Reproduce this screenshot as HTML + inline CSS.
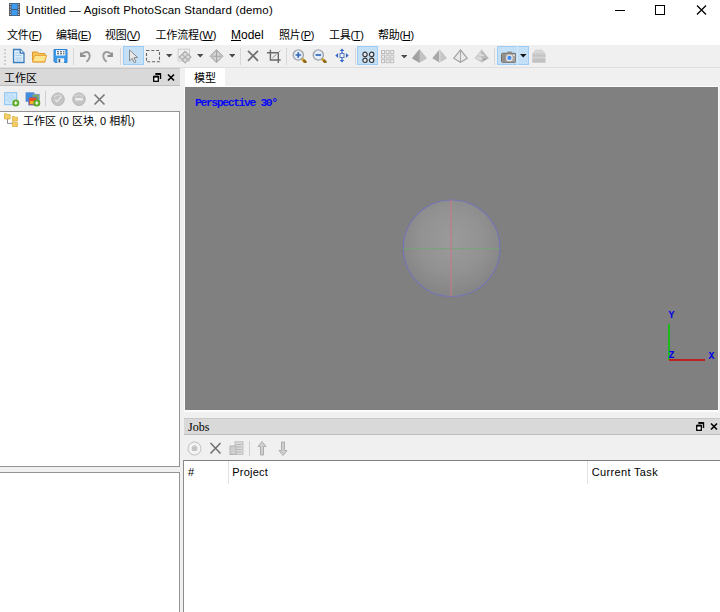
<!DOCTYPE html>
<html><head><meta charset="utf-8">
<style>
html,body{margin:0;padding:0;}
body{width:720px;height:612px;overflow:hidden;background:#f0f0f0;position:relative;
 font-family:"Liberation Sans","Noto Sans CJK SC",sans-serif;font-size:11px;color:#000;}
.abs{position:absolute;}
.t{position:absolute;white-space:nowrap;line-height:16px;}
.l{font-size:11.5px;}
#titlebar{left:0;top:0;width:720px;height:24px;background:#fff;}
#menubar{left:0;top:24px;width:720px;height:21px;background:#fff;}
.ptitle{background:#d9d9d9;border-top:1px solid #c8c8c8;border-bottom:1px solid #bebebe;box-sizing:border-box;}
.white{background:#fff;border:1px solid #949494;box-sizing:border-box;}
.sel{background:#c4e0f7;border:1px solid #9dcdf4;box-sizing:border-box;}
.sep{position:absolute;width:1px;background:#d8d8d8;}
u{text-decoration:underline;}
.mono{font-family:"Liberation Mono",monospace;}
</style></head><body>
<div id="titlebar" class="abs"></div>
<div id="menubar" class="abs"></div>
<svg class="abs" style="left:9px;top:3px" width="11" height="13" viewBox="0 0 11 13" >
 <rect x="0" y="0" width="11" height="13" fill="#4a4e58"/>
 <rect x="2.400" y="0.600" width="6.200" height="5.500" fill="#3d9bf2"/>
 <rect x="2.400" y="6.900" width="6.200" height="5.500" fill="#3d9bf2"/>
 <g fill="#c8ccd2"><rect x="0.700" y="0.8" width="1.100" height="1.300"/><rect x="9.200" y="0.8" width="1.100" height="1.300"/><rect x="0.700" y="3.3" width="1.100" height="1.300"/><rect x="9.200" y="3.3" width="1.100" height="1.300"/><rect x="0.700" y="5.8" width="1.100" height="1.300"/><rect x="9.200" y="5.8" width="1.100" height="1.300"/><rect x="0.700" y="8.3" width="1.100" height="1.300"/><rect x="9.200" y="8.3" width="1.100" height="1.300"/><rect x="0.700" y="10.8" width="1.100" height="1.300"/><rect x="9.200" y="10.8" width="1.100" height="1.300"/></g>
</svg>
<div class="t l" id="ttl" style="left:25.700px;top:2px;letter-spacing:0.155px;">Untitled — Agisoft PhotoScan Standard (demo)</div>
<svg class="abs" style="left:600px;top:0px" width="120" height="22" viewBox="0 0 120 22" fill="none" stroke="#000" stroke-width="1"><path d="M15 10.5h10"/><rect x="55.500" y="5.500" width="9" height="9"/><path d="M97 5.500l9 9M106 5.500l-9 9" stroke-width="1.250"/></svg>
<div class="t" id="m1" style="left:7px;top:27px;letter-spacing:-0.3px;">文件(<u>F</u>)</div>
<div class="t" id="m2" style="left:56px;top:27px;letter-spacing:-0.3px;">编辑(<u>E</u>)</div>
<div class="t" id="m3" style="left:105px;top:27px;letter-spacing:-0.3px;">视图(<u>V</u>)</div>
<div class="t" id="m4" style="left:155.5px;top:27px;letter-spacing:-0.15px;">工作流程(<u>W</u>)</div>
<div class="t" id="m5" style="left:231px;top:27px;letter-spacing:0px;"><span style="font-size:12px"><u>M</u>odel</span></div>
<div class="t" id="m6" style="left:279px;top:27px;letter-spacing:-0.3px;">照片(<u>P</u>)</div>
<div class="t" id="m7" style="left:329px;top:27px;letter-spacing:-0.3px;">工具(<u>T</u>)</div>
<div class="t" id="m8" style="left:378px;top:27px;letter-spacing:-0.3px;">帮助(<u>H</u>)</div>
<svg class="abs" style="left:4px;top:48.6px" width="3" height="17" viewBox="0 0 3 17" ><rect x="0" y="0.0" width="2" height="1.6" fill="#c9c9c9"/><rect x="0" y="3.6" width="2" height="1.6" fill="#c9c9c9"/><rect x="0" y="7.2" width="2" height="1.6" fill="#c9c9c9"/><rect x="0" y="10.8" width="2" height="1.6" fill="#c9c9c9"/><rect x="0" y="14.4" width="2" height="1.6" fill="#c9c9c9"/></svg>
<svg class="abs" style="left:12px;top:48px" width="14" height="16" viewBox="0 0 14 16" >
 <path d="M1.5 1.500h7l3.500 3.500v9.500h-10.500z" fill="#dcecf8" stroke="#3b7fc0" stroke-width="1.300"/>
 <path d="M8.200 1.500v3.700h3.800" fill="#fff" stroke="#2f6fb0" stroke-width="1.200"/>
 <path d="M3.500 5h3M3.500 7.500h6M3.500 10h6M3.500 12h6" stroke="#a9cfee" stroke-width="1"/>
</svg>
<svg class="abs" style="left:31px;top:50px" width="17" height="13" viewBox="0 0 17 13" >
 <path d="M1.500 2h5l1.200 1.500h6.300v8.500h-12.500z" fill="#f6c55a" stroke="#e2982e" stroke-width="1"/>
 <path d="M1.500 11.800l2.200-6.300h12l-2.200 6.300z" fill="#fde58f" stroke="#e9a63a" stroke-width="1"/>
</svg>
<svg class="abs" style="left:53px;top:48px" width="15" height="16" viewBox="0 0 15 16" >
 <path d="M1 1.500h13v13h-12l-1-1z" fill="#3d9be9" stroke="#2a83d6" stroke-width="1"/>
 <rect x="3" y="2.200" width="9.300" height="5.300" fill="#fff"/>
 <path d="M4 3.800h7.500M4 5.800h7.500" stroke="#345" stroke-width="1" stroke-dasharray="2 1"/>
 <rect x="4.300" y="10.300" width="6.800" height="4.500" fill="#f4f4f4"/>
 <rect x="5.600" y="11" width="1.600" height="3.300" fill="#456"/>
</svg>
<div class="sep" style="left:73px;top:48px;height:17px;"></div>
<svg class="abs" style="left:79px;top:50px" width="14" height="13" viewBox="0 0 14 13" >
 <path d="M3 4.300C5 1.300 9.500 1 10.500 4.500C11.200 7.500 9.500 10 8 11.300" fill="none" stroke="#9a9a9a" stroke-width="1.900" stroke-linecap="round"/>
 <path d="M2 2.400v3.600h4.600" fill="none" stroke="#8e8e8e" stroke-width="1.900"/>
</svg>
<svg class="abs" style="left:99.5px;top:50px" width="14" height="13" viewBox="0 0 14 13" >
 <path d="M11 4.300C9 1.300 4.500 1 3.500 4.500C2.800 7.500 4.500 10 6 11.300" fill="none" stroke="#9a9a9a" stroke-width="1.900" stroke-linecap="round"/>
 <path d="M12 2.400v3.600h-4.600" fill="none" stroke="#8e8e8e" stroke-width="1.900"/>
</svg>
<div class="sep" style="left:120px;top:48px;height:17px;"></div>
<div class="abs sel" style="left:123px;top:46px;width:21px;height:19px;"></div>
<svg class="abs" style="left:128px;top:49px" width="11" height="15" viewBox="0 0 11 15" >
 <path d="M1.500 1l0 11 2.700-2.600 2 4.300 1.800-.8-2-4.200 3.700-.2z" fill="#e8e8e8" stroke="#8a8a8a" stroke-width="1"/>
</svg>
<svg class="abs" style="left:145px;top:49px" width="16" height="15" viewBox="0 0 16 15" ><rect x="1.500" y="1.500" width="13" height="11.300" fill="none" stroke="#666" stroke-width="1.100" stroke-dasharray="3 1.800"/></svg>
<svg class="abs" style="left:166.2px;top:54.4px" width="6.5" height="3.4" viewBox="0 0 6.5 3.4" ><path d="M0 0h6.500l-3.250 3.400z" fill="#4a4a4a"/></svg>
<svg class="abs" style="left:177px;top:48px" width="16" height="16" viewBox="0 0 16 16" >
 <rect x="1.200" y="1.200" width="11.300" height="11.800" fill="none" stroke="#cdcdcd" stroke-width="1"/>
 <path d="M8.100 2.900l6.200 6.200-6.200 6.200-6.200-6.200z" fill="#b4b4b4" stroke="#a6a6a6" stroke-width="0.800"/>
 <g fill="#dedede"><circle cx="8.100" cy="6.300" r="1.500"/><circle cx="8.100" cy="12" r="1.500"/><circle cx="5.200" cy="9.100" r="1.500"/><circle cx="11" cy="9.100" r="1.500"/></g>
</svg>
<svg class="abs" style="left:197.3px;top:54.4px" width="6.5" height="3.4" viewBox="0 0 6.5 3.4" ><path d="M0 0h6.500l-3.250 3.400z" fill="#4a4a4a"/></svg>
<svg class="abs" style="left:209px;top:48px" width="16" height="16" viewBox="0 0 16 16" >
 <path d="M7.500 1.600l6.500 6.600-6.500 6.600-6.500-6.600z" fill="#c4c4c4" stroke="#ababab" stroke-width="1"/>
 <path d="M7.500 3.500l4.600 4.700-4.600 4.700-4.600-4.700z" fill="#d6d6d6"/>
 <path d="M7.500 2.500v11.500M3 8.200h9" stroke="#a4a4a4" stroke-width="1.100"/>
</svg>
<svg class="abs" style="left:228.7px;top:54.4px" width="6.5" height="3.4" viewBox="0 0 6.5 3.4" ><path d="M0 0h6.500l-3.250 3.400z" fill="#4a4a4a"/></svg>
<div class="sep" style="left:240px;top:48px;height:17px;"></div>
<svg class="abs" style="left:246px;top:49px" width="14" height="14" viewBox="0 0 14 14" ><path d="M2 1.800l10 10M12 1.800l-10 10" stroke="#707070" stroke-width="1.700" fill="none"/></svg>
<svg class="abs" style="left:266px;top:49px" width="16" height="16" viewBox="0 0 16 16" ><path d="M4.400 0.700v10.300h10.300M1 3.700h11.300v10.300" stroke="#6a6a6a" stroke-width="1.400" fill="none"/><path d="M6.300 9l4.200-3.700M12.300 3.700l2-2" stroke="#8a8a8a" stroke-width="1" fill="none"/></svg>
<div class="sep" style="left:286px;top:48px;height:17px;"></div>
<svg class="abs" style="left:292px;top:48.5px" width="15" height="14.5" viewBox="0 0 15 14.5" >
 <path d="M10 9.700l3 3" stroke="#d9a423" stroke-width="3" stroke-linecap="round"/>
 <path d="M12.300 12l1 1" stroke="#8a6a20" stroke-width="2.600" stroke-linecap="round"/>
 <circle cx="6.300" cy="6" r="5.100" fill="#e6eef8" stroke="#a2a6ac" stroke-width="1.400"/>
 <path d="M3.500 6h5.600M6.300 3.200v5.600" stroke="#3565b5" stroke-width="1.700"/></svg>
<svg class="abs" style="left:312.3px;top:48.5px" width="15" height="14.5" viewBox="0 0 15 14.5" >
 <path d="M10 9.700l3 3" stroke="#d9a423" stroke-width="3" stroke-linecap="round"/>
 <path d="M12.300 12l1 1" stroke="#8a6a20" stroke-width="2.600" stroke-linecap="round"/>
 <circle cx="6.300" cy="6" r="5.100" fill="#e6eef8" stroke="#a2a6ac" stroke-width="1.400"/>
 <path d="M3.500 6h5.600" stroke="#3565b5" stroke-width="1.700"/></svg>
<svg class="abs" style="left:334.7px;top:48.4px" width="14" height="15" viewBox="0 0 14 15" >
 <rect x="5" y="5.500" width="4" height="4" fill="#f0f4fa" stroke="#5a7ab8" stroke-width="1"/>
 <path d="M7 0.500l2.300 2.600h-4.600zM7 14.500l2.300-2.600h-4.600zM0.300 7.500l2.800-2.400v4.800zM13.700 7.500l-2.800-2.400v4.800z" fill="#3568c8"/>
 <path d="M7 2.500v2.500M7 10v2.500" stroke="#3568c8" stroke-width="1.200"/>
</svg>
<div class="sep" style="left:355px;top:48px;height:17px;"></div>
<div class="abs sel" style="left:357px;top:46px;width:21px;height:19px;"></div>
<svg class="abs" style="left:361px;top:50px" width="15" height="14" viewBox="0 0 15 14" ><g fill="#e6eef5" stroke="#383838" stroke-width="1.200">
 <circle cx="4" cy="4.400" r="2.200"/><circle cx="10.600" cy="4.400" r="2.200"/><circle cx="4" cy="10.300" r="2.200"/><circle cx="10.600" cy="10.300" r="2.200"/></g></svg>
<svg class="abs" style="left:381px;top:50px" width="14" height="14" viewBox="0 0 14 14" ><rect x="0.5" y="0.5" width="3" height="3" fill="none" stroke="#bdbdbd" stroke-width="1"/><rect x="5.1" y="0.5" width="3" height="3" fill="none" stroke="#bdbdbd" stroke-width="1"/><rect x="9.7" y="0.5" width="3" height="3" fill="none" stroke="#bdbdbd" stroke-width="1"/><rect x="0.5" y="5.1" width="3" height="3" fill="none" stroke="#bdbdbd" stroke-width="1"/><rect x="5.1" y="5.1" width="3" height="3" fill="none" stroke="#bdbdbd" stroke-width="1"/><rect x="9.7" y="5.1" width="3" height="3" fill="none" stroke="#bdbdbd" stroke-width="1"/><rect x="0.5" y="9.7" width="3" height="3" fill="none" stroke="#bdbdbd" stroke-width="1"/><rect x="5.1" y="9.7" width="3" height="3" fill="none" stroke="#bdbdbd" stroke-width="1"/><rect x="9.7" y="9.7" width="3" height="3" fill="none" stroke="#bdbdbd" stroke-width="1"/></svg>
<svg class="abs" style="left:400.6px;top:55px" width="6.5" height="3.4" viewBox="0 0 6.5 3.4" ><path d="M0 0h6.500l-3.250 3.400z" fill="#4a4a4a"/></svg>
<svg class="abs" style="left:411.8px;top:49px" width="15" height="15" viewBox="0 0 15 15" ><path d="M7.500 0.500l7.200 8.800-7.200 4.200-7.200-4.200z" fill="#a2a2a2"/><path d="M7.500 0.500l7.200 8.800-7.200 4.200z" fill="#c2c2c2"/><path d="M7.500 0.500l-7.200 8.800 7.200 4.200" fill="none" stroke="#969696" stroke-width="0.600"/></svg>
<svg class="abs" style="left:432.4px;top:49px" width="15" height="15" viewBox="0 0 15 15" ><path d="M7.500 0.500l7.200 8.800-7.200 4.200-7.200-4.200z" fill="#a8a8a8"/><path d="M7.500 0.500l7.200 8.800-7.200 4.200z" fill="#c6c6c6"/><path d="M7.800 1v12" stroke="#e2e2e2" stroke-width="1"/></svg>
<svg class="abs" style="left:453.2px;top:49px" width="15" height="15" viewBox="0 0 15 15" ><path d="M7.500 0.800l6.900 8.500-6.900 4-6.900-4z" fill="#e9e9e9" stroke="#9e9e9e" stroke-width="1.100"/><path d="M7.500 0.800v12.500" stroke="#a8a8a8" stroke-width="1" fill="none"/></svg>
<svg class="abs" style="left:473.6px;top:49px" width="15" height="15" viewBox="0 0 15 15" ><path d="M7.500 0.500l7.200 8.800-7.200 4.200-7.200-4.200z" fill="#cdcdcd"/><path d="M7.500 0.500l7.200 8.800-7.200 4.200z" fill="#bababa"/><path d="M5 5l5 2M3 8.500l5 1.500" stroke="#e8e8e8" stroke-width="1.300"/><path d="M9 11l3-1.500" stroke="#9a9a9a" stroke-width="1.200"/></svg>
<div class="sep" style="left:494px;top:48px;height:17px;"></div>
<div class="abs sel" style="left:497px;top:46px;width:32px;height:19px;"></div>
<div class="abs" style="left:517px;top:46px;width:1px;height:19px;background:#d6e9f8;"></div>
<svg class="abs" style="left:500.7px;top:50.5px" width="15.5" height="12" viewBox="0 0 15.5 12" >
 <rect x="0.500" y="2.300" width="14.300" height="9" rx="1" fill="#aaa6a0" stroke="#6e6a66" stroke-width="1"/>
 <rect x="6.200" y="0.600" width="4.600" height="2.200" fill="#8a8682"/>
 <rect x="1.500" y="3.300" width="3" height="7" fill="#8e8a86"/>
 <circle cx="8.400" cy="6.900" r="2.700" fill="#3d8cf0" stroke="#e4e6ea" stroke-width="1.300"/>
 <rect x="11.800" y="3.600" width="2" height="1.300" fill="#dfe3e8"/>
</svg>
<svg class="abs" style="left:520px;top:54.4px" width="6.5" height="3.4" viewBox="0 0 6.5 3.4" ><path d="M0 0h6.500l-3.250 3.400z" fill="#111"/></svg>
<svg class="abs" style="left:532px;top:49px" width="14" height="14" viewBox="0 0 14 14" >
 <path d="M3.300 0.500h7l2.500 3.500h-12z" fill="#d6d6d6"/>
 <rect x="0.300" y="4" width="13.200" height="2.800" fill="#cccccc"/>
 <rect x="0.300" y="7.300" width="13.200" height="2.600" fill="#d2d2d2"/>
 <rect x="0.300" y="10.400" width="13.200" height="2.600" fill="#c4c4c4"/>
 <path d="M0.300 7h13.200M0.300 10.200h13.200M0.300 13.200h13.200" stroke="#aaa" stroke-width="0.700"/>
</svg>
<div class="abs" style="left:0;top:67px;width:720px;height:1px;background:#dedede;"></div>
<div class="abs ptitle" style="left:0;top:68px;width:180px;height:18px;"></div>
<div class="t" id="wk" style="left:4px;top:70px;">工作区</div>
<svg class="abs" style="left:153px;top:73px" width="24" height="10" viewBox="0 0 24 10" >
 <path d="M2.500 1h5v5" fill="none" stroke="#000" stroke-width="1.400"/><path d="M2.500 0.800h5" stroke="#000" stroke-width="1.800"/>
 <rect x="0.700" y="3.700" width="4.600" height="4.600" fill="#fff" stroke="#000" stroke-width="1.300"/><path d="M0.500 3.500h5" stroke="#000" stroke-width="1.800"/>
 <path d="M15 1.500l6 6M21 1.500l-6 6" stroke="#000" stroke-width="1.600" fill="none"/></svg>
<svg class="abs" style="left:4px;top:92px" width="17" height="15" viewBox="0 0 17 15" >
 <rect x="0.700" y="0.700" width="12" height="12" fill="#cfe7fb" stroke="#86c0f0" stroke-width="1"/>
 <g fill="#b2d6f6"><rect x="2.500" y="2.500" width="2" height="2"/><rect x="6.500" y="2.500" width="2" height="2"/><rect x="4.500" y="4.500" width="2" height="2"/><rect x="8.500" y="4.500" width="2" height="2"/><rect x="2.500" y="6.500" width="2" height="2"/><rect x="6.500" y="6.500" width="2" height="2"/><rect x="4.500" y="8.500" width="2" height="2"/></g>
 <circle cx="11.800" cy="11" r="3.500" fill="#5aa922"/>
 <path d="M10.100 11h3.400M11.800 9.300v3.400" stroke="#fff" stroke-width="1.200"/>
</svg>
<svg class="abs" style="left:25px;top:92px" width="17" height="15" viewBox="0 0 17 15" >
 <rect x="1" y="0.800" width="8" height="8.500" fill="#3d8ee6" stroke="#5a88c8" stroke-width="0.800"/>
 <rect x="7.500" y="2.300" width="6.700" height="8" fill="#7fae58" stroke="#6a90d0" stroke-width="0.800"/>
 <rect x="3.800" y="5.200" width="8" height="7.800" fill="#f04a22" stroke="#4a80d0" stroke-width="0.900"/>
 <rect x="5" y="9" width="4" height="3" fill="#f4b02a"/>
 <circle cx="11.800" cy="11" r="3.500" fill="#5aa922"/>
 <path d="M10.100 11h3.400M11.800 9.300v3.400" stroke="#fff" stroke-width="1.200"/>
</svg>
<div class="sep" style="left:45px;top:91px;height:15px;background:#cfcfcf;"></div>
<svg class="abs" style="left:51px;top:92px" width="14" height="14" viewBox="0 0 14 14" >
 <circle cx="7" cy="7.200" r="6.300" fill="#c4c4c4" stroke="#b0b0b0" stroke-width="0.800"/>
 <path d="M3 5a5.500 5.500 0 0 1 8-0.500" fill="none" stroke="#dcdcdc" stroke-width="1.200"/>
 <path d="M4 7.500l2 2 4-4.500" fill="none" stroke="#e8e8e8" stroke-width="1.500"/>
</svg>
<svg class="abs" style="left:72px;top:92px" width="14" height="14" viewBox="0 0 14 14" >
 <circle cx="7" cy="7.200" r="6.300" fill="#c4c4c4" stroke="#b0b0b0" stroke-width="0.800"/>
 <path d="M3 4.500a5.500 5.500 0 0 1 8 0" fill="none" stroke="#d8d8d8" stroke-width="1.200"/>
 <rect x="3.200" y="6" width="7.600" height="2.600" rx="0.500" fill="#ededed"/>
</svg>
<svg class="abs" style="left:93px;top:93px" width="13" height="13" viewBox="0 0 13 13" ><path d="M1.500 1.500l10 10M11.500 1.500l-10 10" stroke="#777" stroke-width="1.600" fill="none"/></svg>
<div class="abs white" style="left:-1px;top:111px;width:181px;height:356px;"></div>
<svg class="abs" style="left:4px;top:113px" width="14" height="14" viewBox="0 0 14 14" >
 <path d="M3.500 6v4.400h4.800" fill="none" stroke="#8c8c94" stroke-width="1"/>
 <path d="M0.400 0.700h2.300l0.800 0.900h2.600v4.400h-5.700z" fill="#f3cf62" stroke="#d9ad45" stroke-width="0.800"/>
 <path d="M8.400 3.500h2l0.700 0.800h2.500v3.700h-5.200z" fill="#f3cf62" stroke="#d9ad45" stroke-width="0.800"/>
 <path d="M8.400 8.900h2l0.700 0.800h2.500v3.700h-5.200z" fill="#f3cf62" stroke="#d9ad45" stroke-width="0.800"/>
</svg>
<div class="t" id="tree" style="left:23px;top:113px;">工作区 (0 区块, 0 相机)</div>
<div class="abs white" style="left:-1px;top:472px;width:181px;height:150px;"></div>
<div class="abs" style="left:185px;top:68px;width:40px;height:19px;background:#fff;"></div>
<div class="t" id="tab" style="left:194px;top:70px;">模型</div>
<div class="abs" style="left:183.500px;top:86px;width:535.500px;height:326px;background:#fcfcfc;"></div>
<div class="abs" id="vp" style="left:185px;top:87px;width:533px;height:323px;background:#808080;"></div>
<div class="t mono" id="persp" style="left:195px;top:95px;color:#0808f8;font-size:11.500px;letter-spacing:-1.450px;font-weight:bold;">Perspective 30°</div>
<svg class="abs" style="left:395px;top:192px" width="112" height="112" viewBox="0 0 112 112" >
 <defs><radialGradient id="sg" cx="50%" cy="42%" r="55%"><stop offset="0" stop-color="#9b9b9b"/><stop offset="0.600" stop-color="#929292"/><stop offset="1" stop-color="#868686"/></radialGradient></defs>
 <circle cx="56.650" cy="56.250" r="48.300" fill="url(#sg)" stroke="#7474b6" stroke-width="1.100"/>
 <path d="M8.400 56.700h96.500" stroke="#74a674" stroke-width="0.850"/>
 <path d="M58.300 8.200v96" stroke="#8a9a8a" stroke-width="0.500"/>
 <path d="M56 8v96.500" stroke="#c27a8a" stroke-width="1.250"/>
</svg>
<svg class="abs" style="left:660px;top:305px" width="60" height="62" viewBox="0 0 60 62" >
 <path d="M9 19v36" stroke="#00c800" stroke-width="1.600"/>
 <path d="M9 55h36" stroke="#d00000" stroke-width="1.600"/>
 <g font-family="Liberation Mono, monospace" font-size="10" font-weight="bold" fill="#0000e8">
 <text x="8.500" y="11" transform="scale(1,1.180)">Y</text><text x="8.500" y="45.300" transform="scale(1,1.180)">Z</text><text x="48.500" y="45.800" transform="scale(1,1.180)">X</text></g>
</svg>
<div class="abs ptitle" style="left:183.500px;top:418px;width:537px;height:17px;"></div>
<div class="t" id="jobs" style="left:188px;top:418.800px;font-family:Liberation Serif,serif;font-size:12px;">Jobs</div>
<svg class="abs" style="left:696px;top:422px" width="24" height="10" viewBox="0 0 24 10" >
 <path d="M2.500 1h5v5" fill="none" stroke="#000" stroke-width="1.400"/><path d="M2.500 0.800h5" stroke="#000" stroke-width="1.800"/>
 <rect x="0.700" y="3.700" width="4.600" height="4.600" fill="#fff" stroke="#000" stroke-width="1.300"/><path d="M0.500 3.500h5" stroke="#000" stroke-width="1.800"/>
 <path d="M15 1.500l6 6M21 1.500l-6 6" stroke="#000" stroke-width="1.600" fill="none"/></svg>
<svg class="abs" style="left:187px;top:441px" width="15" height="15" viewBox="0 0 15 15" >
 <circle cx="7.500" cy="7.500" r="6.500" fill="#f3f3f3" stroke="#c0c0c0" stroke-width="1"/>
 <rect x="4.800" y="5.200" width="5.400" height="4.800" rx="1" fill="#c4c4c4"/><rect x="6" y="4.300" width="3" height="1.200" fill="#cacaca"/>
</svg>
<svg class="abs" style="left:209px;top:442px" width="13" height="13" viewBox="0 0 13 13" ><path d="M1.500 1l10 10.500M11.500 1l-10 10.500" stroke="#6e6e6e" stroke-width="1.500" fill="none"/></svg>
<svg class="abs" style="left:229px;top:441px" width="15" height="14" viewBox="0 0 15 14" >
 <rect x="6" y="0.800" width="8" height="12.500" fill="#dcdcdc" stroke="#bdbdbd" stroke-width="1"/>
 <path d="M7.500 3.500h5M7.500 6h5M7.500 8.500h5M7.500 11h5" stroke="#b4b4b4" stroke-width="1"/>
 <rect x="1" y="5" width="6" height="8.500" fill="#cfcfcf" stroke="#b2b2b2" stroke-width="1"/>
</svg>
<div class="sep" style="left:249px;top:441px;height:15px;background:#d0d0d0;"></div>
<svg class="abs" style="left:257px;top:441px" width="10" height="15" viewBox="0 0 10 15" ><path d="M5 0.500l4 5h-2.500v8.500h-3v-8.500h-2.500z" fill="#cfcfcf" stroke="#a8a8a8" stroke-width="0.900"/></svg>
<svg class="abs" style="left:278px;top:441px" width="10" height="15" viewBox="0 0 10 15" ><path d="M5 14.500l4-5h-2.500v-8.500h-3v8.500h-2.500z" fill="#cfcfcf" stroke="#a8a8a8" stroke-width="0.900"/></svg>
<div class="abs white" style="left:183px;top:460px;width:540px;height:160px;border-color:#808080 #8c8c8c;"></div>
<div class="abs" style="left:228px;top:461px;width:1px;height:23px;background:#e2e2e2;"></div>
<div class="abs" style="left:587px;top:461px;width:1px;height:23px;background:#e2e2e2;"></div>
<div class="t l" id="h1" style="left:188px;top:464px;font-size:11px;">#</div>
<div class="t l" id="h2" style="left:232.300px;top:464px;font-size:11px;letter-spacing:0.200px;">Project</div>
<div class="t l" id="h3" style="left:591.700px;top:464px;font-size:11px;letter-spacing:0.350px;">Current Task</div>
</body></html>
